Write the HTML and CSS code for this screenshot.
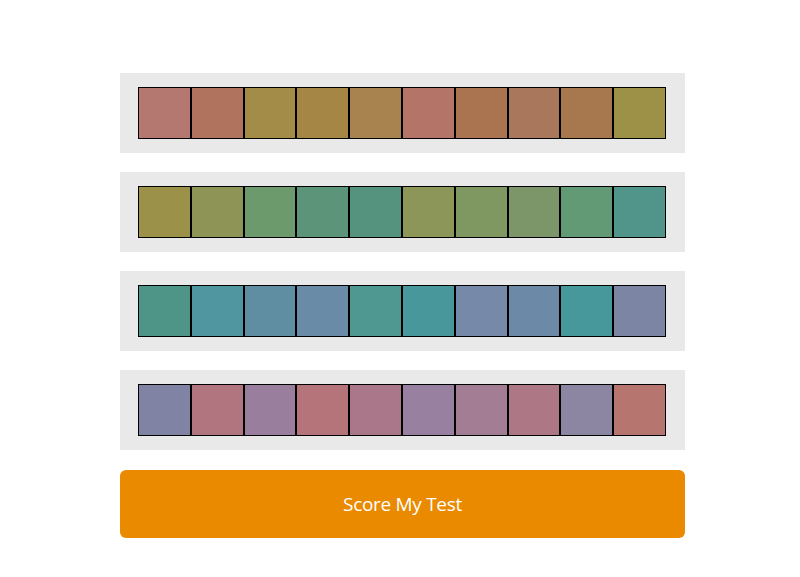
FILE: index.html
```html
<!DOCTYPE html>
<html lang="en">
<head>
<meta charset="utf-8">
<title>Hue Test</title>
<link rel="stylesheet" href="styles.css">
</head>
<body>
<main class="test">
  <div class="row">
    <div class="chip" style="background:#b57870"></div>
    <div class="chip" style="background:#b0735e"></div>
    <div class="chip" style="background:#a38c47"></div>
    <div class="chip" style="background:#a68644"></div>
    <div class="chip" style="background:#a8834f"></div>
    <div class="chip" style="background:#b57468"></div>
    <div class="chip" style="background:#a9744f"></div>
    <div class="chip" style="background:#a9775b"></div>
    <div class="chip" style="background:#a7784d"></div>
    <div class="chip" style="background:#9c9146"></div>
  </div>
  <div class="row">
    <div class="chip" style="background:#9c9148"></div>
    <div class="chip" style="background:#8e9455"></div>
    <div class="chip" style="background:#6c9a6c"></div>
    <div class="chip" style="background:#5c9479"></div>
    <div class="chip" style="background:#56937e"></div>
    <div class="chip" style="background:#8c9658"></div>
    <div class="chip" style="background:#7f9760"></div>
    <div class="chip" style="background:#7c9569"></div>
    <div class="chip" style="background:#629a75"></div>
    <div class="chip" style="background:#51958a"></div>
  </div>
  <div class="row">
    <div class="chip" style="background:#4f9587"></div>
    <div class="chip" style="background:#5096a0"></div>
    <div class="chip" style="background:#5f8ea3"></div>
    <div class="chip" style="background:#6a8ba7"></div>
    <div class="chip" style="background:#4f9791"></div>
    <div class="chip" style="background:#48979a"></div>
    <div class="chip" style="background:#7789a8"></div>
    <div class="chip" style="background:#6c8aa7"></div>
    <div class="chip" style="background:#46989a"></div>
    <div class="chip" style="background:#7d85a4"></div>
  </div>
  <div class="row">
    <div class="chip" style="background:#8083a4"></div>
    <div class="chip" style="background:#b0757e"></div>
    <div class="chip" style="background:#997f9d"></div>
    <div class="chip" style="background:#b5747a"></div>
    <div class="chip" style="background:#aa778a"></div>
    <div class="chip" style="background:#9880a0"></div>
    <div class="chip" style="background:#a27d94"></div>
    <div class="chip" style="background:#ad7785"></div>
    <div class="chip" style="background:#8d86a3"></div>
    <div class="chip" style="background:#b6766f"></div>
  </div>
  <button class="score" type="button">Score My Test</button>
</main>
</body>
</html>
```
FILE: styles.css
```css
html, body {
  margin: 0;
  padding: 0;
  background: #ffffff;
}

.test {
  width: 565px;
  margin: 73px 0 0 120px;
  display: flex;
  flex-direction: column;
  gap: 19px;
}

/* grey tray holding one row of ten colour chips */
.row {
  background: #e9e9e9;
  padding: 14px 19px 14px 18px;
  display: grid;
  grid-template-columns: repeat(10, 1fr);
}

.chip {
  height: 50px;
  border: 1px solid #000000;
}

.score {
  height: 68px;
  margin-top: 1px;
  border: none;
  border-radius: 6px;
  background: #e98a00;
  color: #ffffff;
  font-family: "Open Sans", "Noto Sans", sans-serif;
  font-size: 19px;
  letter-spacing: -0.3px;
  cursor: pointer;
  padding: 0;
}
```
